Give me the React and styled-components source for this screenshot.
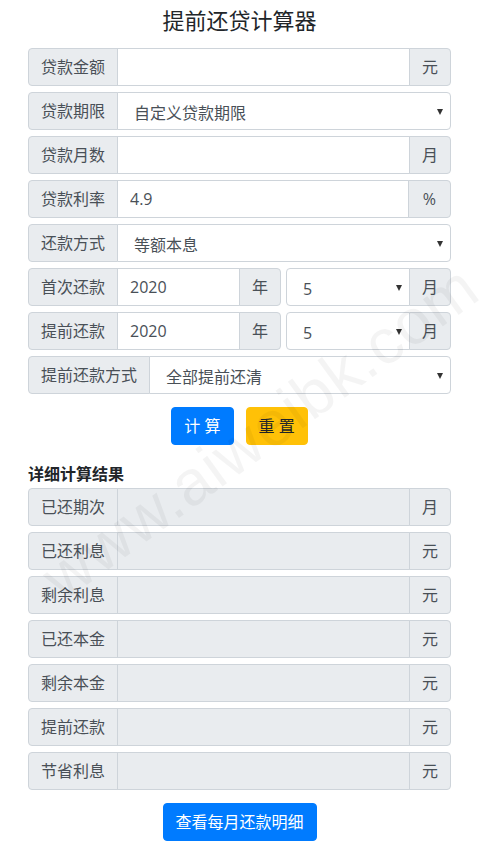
import React from "react";
import styled, { createGlobalStyle } from "styled-components";

const GlobalStyle = createGlobalStyle`
  body {
    margin: 0;
    background: #fff;
    color: #212529;
    font-family: "Segoe UI", "Open Sans", "Noto Sans CJK SC", sans-serif;
    font-size: 16px;
    line-height: 1.5;
  }
  * {
    box-sizing: border-box;
  }
`;

const Page = styled.div`
  position: relative;
  width: 423px;
  margin-left: 28px;
  padding-bottom: 18px;
`;

const Title = styled.h3`
  margin: 0 0 13px;
  padding-top: 5px;
  font-size: 22px;
  font-weight: 400;
  line-height: 30px;
  text-align: center;
  color: #212529;
`;

const Group = styled.div`
  display: flex;
  height: 38px;
  margin-bottom: 6px;
`;

const Addon = styled.span`
  display: flex;
  align-items: center;
  justify-content: center;
  flex-shrink: 0;
  min-width: ${(p) => (p.$side === "right" ? "42px" : "0")};
  padding: 0 ${(p) => (p.$pad ? p.$pad : 12)}px;
  background: #e9ecef;
  border: 1px solid #ced4da;
  color: #495057;
  font-size: 16px;
  white-space: nowrap;
  border-radius: ${(p) =>
    p.$side === "left" ? "4px 0 0 4px" : p.$side === "right" ? "0 4px 4px 0" : "0"};
  margin-left: ${(p) => (p.$side === "left" ? "0" : "-1px")};
`;

const Field = styled.input`
  flex: 1;
  min-width: 0;
  height: 38px;
  margin-left: -1px;
  padding: 0 12px;
  border: 1px solid #ced4da;
  border-radius: 0;
  background: ${(p) => (p.readOnly ? "#e9ecef" : "#fff")};
  color: #495057;
  font-family: inherit;
  font-size: 16px;
  outline: none;
`;

const SelectWrap = styled.div`
  position: relative;
  display: flex;
  flex: ${(p) => (p.$width ? "0 0 " + p.$width + "px" : "1")};
  margin-left: ${(p) => (p.$gap ? p.$gap + "px" : "-1px")};
  &::after {
    content: "";
    position: absolute;
    right: 8px;
    top: 17px;
    border-left: 3.5px solid transparent;
    border-right: 3.5px solid transparent;
    border-top: 6px solid #333;
    pointer-events: none;
  }
`;

const Select = styled.select`
  appearance: none;
  flex: 1;
  min-width: 0;
  height: 38px;
  padding: 3px 24px 0 16px;
  border: 1px solid #ced4da;
  border-radius: ${(p) => (p.$round ? "4px 0 0 4px" : "0 4px 4px 0")};
  background: #fff;
  color: #495057;
  font-family: inherit;
  font-size: 16px;
  outline: none;
`;

const Buttons = styled.div`
  display: flex;
  justify-content: center;
  gap: 12px;
  margin: 13px 0 17px;
`;

const Button = styled.button`
  height: 38px;
  padding: 0 12px;
  border: 1px solid ${(p) => (p.$variant === "warning" ? "#ffc107" : "#007bff")};
  border-radius: 4px;
  background: ${(p) => (p.$variant === "warning" ? "#ffc107" : "#007bff")};
  color: ${(p) => (p.$variant === "warning" ? "#212529" : "#fff")};
  font-family: inherit;
  font-size: 16px;
  line-height: 1;
  white-space: nowrap;
  cursor: pointer;
`;

const WideButton = styled(Button)`
  width: 154px;
  padding: 0;
  font-size: 16px;
`;

const Heading = styled.h5`
  margin: 0 0 2px;
  font-size: 16px;
  font-weight: 700;
  line-height: 24px;
  color: #212529;
`;

const Footer = styled.div`
  display: flex;
  justify-content: center;
  margin-top: 13px;
`;

const Watermark = styled.div`
  position: absolute;
  left: 232px;
  top: 432px;
  transform: translate(-50%, -50%) rotate(-36deg);
  font-family: "Liberation Sans", Arial, sans-serif;
  font-size: 64px;
  color: rgba(0, 0, 0, 0.045);
  white-space: nowrap;
  pointer-events: none;
  letter-spacing: 1px;
`;

const TextRow = ({ label, unit, value = "", readOnly, unitPad }) => (
  <Group>
    <Addon $side="left">{label}</Addon>
    <Field defaultValue={value} readOnly={readOnly} />
    <Addon $side="right" $pad={unitPad}>{unit}</Addon>
  </Group>
);

const SelectRow = ({ label, options }) => (
  <Group>
    <Addon $side="left">{label}</Addon>
    <SelectWrap>
      <Select>
        {options.map((o) => (
          <option key={o}>{o}</option>
        ))}
      </Select>
    </SelectWrap>
  </Group>
);

const months = Array.from({ length: 12 }, (_, i) => String(i + 1));

const DateRow = ({ label }) => (
  <Group>
    <Addon $side="left">{label}</Addon>
    <Field defaultValue="2020" />
    <Addon $side="right">年</Addon>
    <SelectWrap $width={124} $gap={5}>
      <Select $round defaultValue="5">
        {months.map((m) => (
          <option key={m}>{m}</option>
        ))}
      </Select>
    </SelectWrap>
    <Addon $side="right">月</Addon>
  </Group>
);

const results = [
  ["已还期次", "月"],
  ["已还利息", "元"],
  ["剩余利息", "元"],
  ["已还本金", "元"],
  ["剩余本金", "元"],
  ["提前还款", "元"],
  ["节省利息", "元"],
];

export default function App() {
  return (
    <>
      <GlobalStyle />
      <Page>
        <Title>提前还贷计算器</Title>
        <TextRow label="贷款金额" unit="元" />
        <SelectRow label="贷款期限" options={["自定义贷款期限", "1年", "5年", "10年", "20年", "30年"]} />
        <TextRow label="贷款月数" unit="月" />
        <TextRow label="贷款利率" unit="%" value="4.9" unitPad={14} />
        <SelectRow label="还款方式" options={["等额本息", "等额本金"]} />
        <DateRow label="首次还款" />
        <DateRow label="提前还款" />
        <SelectRow label="提前还款方式" options={["全部提前还清", "部分提前还款"]} />
        <Buttons>
          <Button>计 算</Button>
          <Button $variant="warning">重 置</Button>
        </Buttons>
        <Heading>详细计算结果</Heading>
        {results.map(([label, unit]) => (
          <TextRow key={label} label={label} unit={unit} readOnly />
        ))}
        <Footer>
          <WideButton>查看每月还款明细</WideButton>
        </Footer>
        <Watermark>www.aiweibk.com</Watermark>
      </Page>
    </>
  );
}
